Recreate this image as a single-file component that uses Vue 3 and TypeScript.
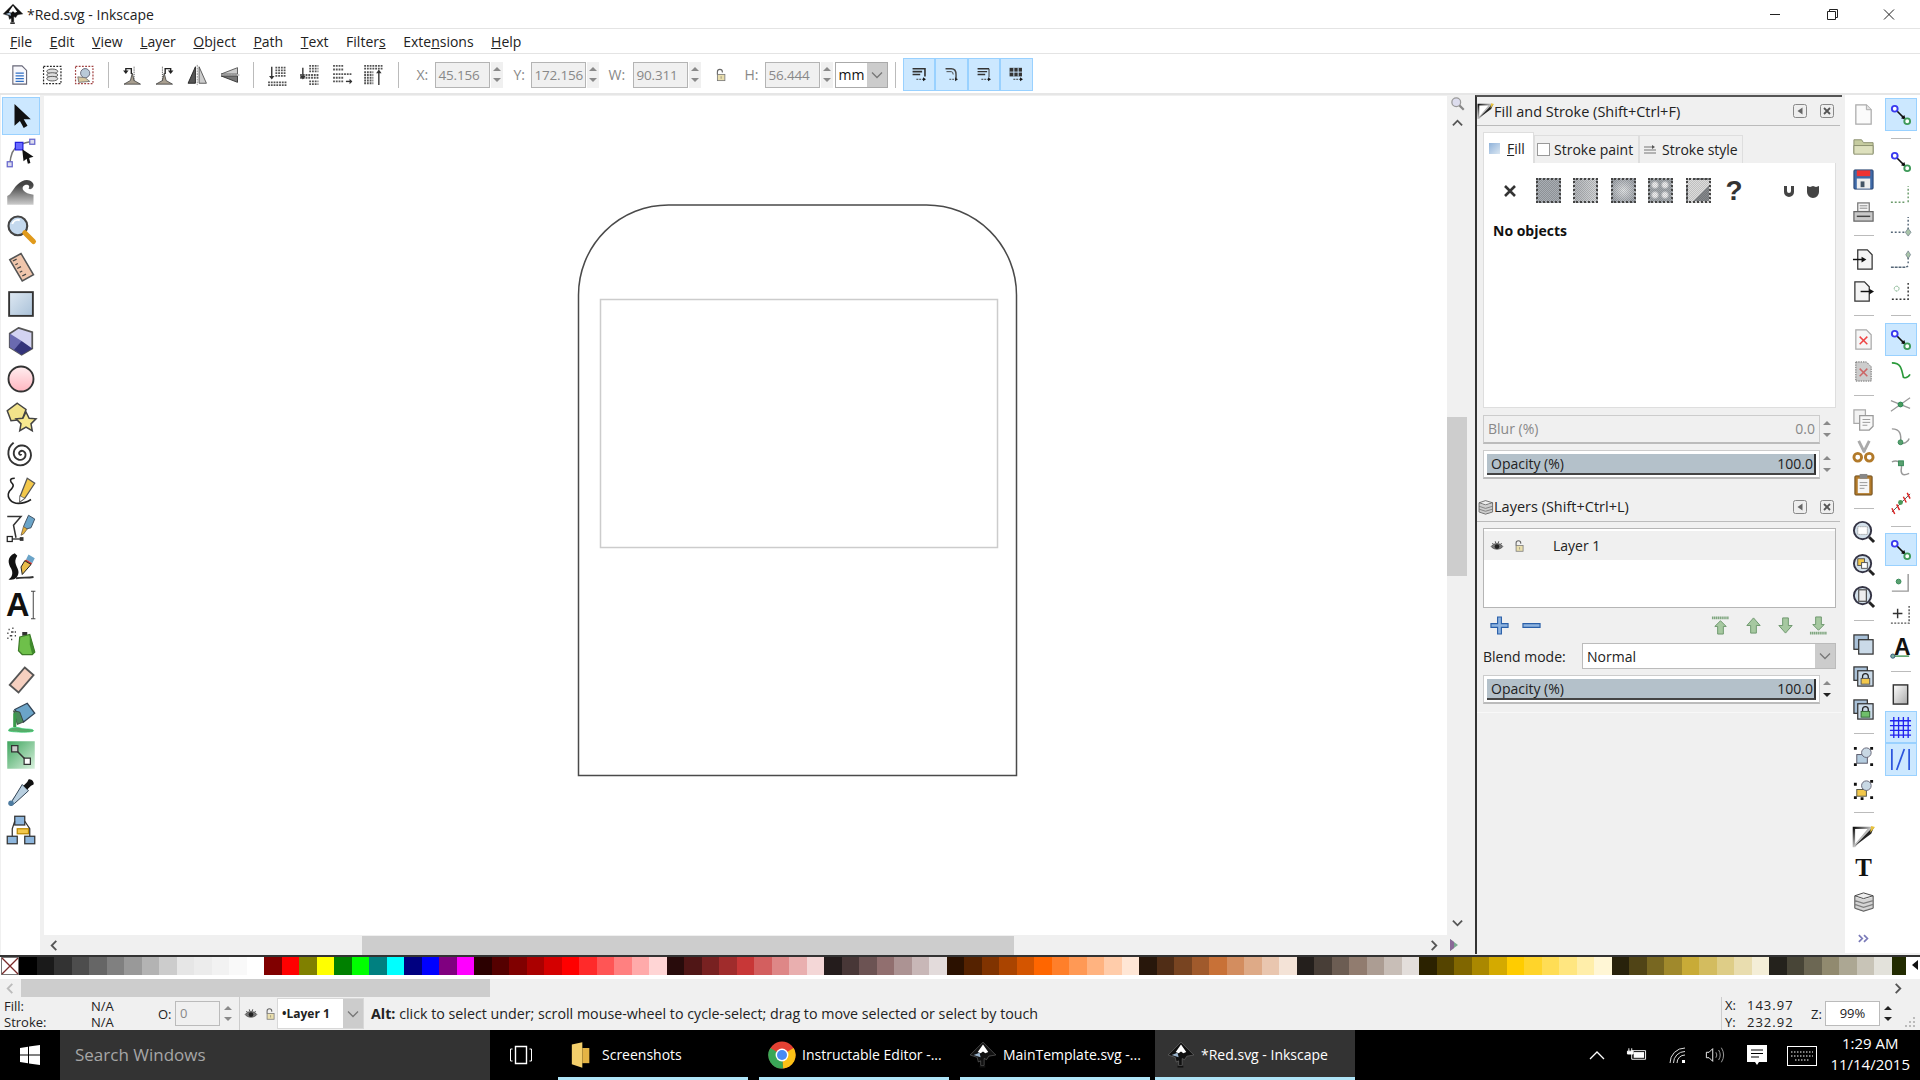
<template>
  <div class="app">
    <!-- title bar -->
    <div class="titlebar">
      <svg class="title-logo" viewBox="0 0 24 24" v-html="icons.inkscape"></svg>
      <span class="title-text">*Red.svg - Inkscape</span>
      <div class="win-btns">
        <svg viewBox="0 0 46 29"><path d="M18 14.5h10" stroke="#222" /></svg>
        <svg viewBox="0 0 46 29"><path d="M18.5 11.5h8v8h-8zM20.5 11.5v-2h8v8h-2" fill="none" stroke="#222" /></svg>
        <svg viewBox="0 0 46 29"><path d="M18 9.5l10 10M28 9.5l-10 10" stroke="#222" /></svg>
      </div>
    </div>

    <!-- menu -->
    <div class="menubar">
      <span v-for="m in menus" :key="m.pre + m.key + m.post" class="menu-item">{{ m.pre }}<u>{{ m.key }}</u>{{ m.post }}</span>
    </div>

    <!-- commands bar -->
    <div class="toolbar">
      <svg v-for="n in ['selAll', 'selLayers', 'deselect']" :key="n" class="tb-icon" viewBox="0 0 24 24" v-html="icons[n]"></svg>
      <span class="tb-sep"></span>
      <svg v-for="n in ['rotL', 'rotR', 'flipH', 'flipV']" :key="n" class="tb-icon" viewBox="0 0 24 24" v-html="icons[n]"></svg>
      <span class="tb-sep"></span>
      <svg v-for="n in ['lower', 'lowerOne', 'raiseOne', 'raise']" :key="n" class="tb-icon" viewBox="0 0 24 24" v-html="icons[n]"></svg>
      <span class="tb-sep"></span>
      <template v-for="f in dims" :key="f.label">
        <span class="dim-label" :style="{ marginLeft: f.gap + 'px', width: f.width + 'px' }">{{ f.label }}</span>
        <span class="dim-box">{{ f.value }}</span>
        <span class="spin"><i class="up"></i><i class="down"></i></span>
        <svg v-if="f.label === 'W:'" class="dim-lock" viewBox="0 0 24 24" v-html="icons.lock"></svg>
      </template>
      <div class="unit-combo">
        <span>mm</span>
        <b><svg viewBox="0 0 12 8"><path d="M1 1.5l5 5 5-5" fill="none" stroke="#777" stroke-width="1.3" /></svg></b>
      </div>
      <span class="tb-sep sep-units"></span>
      <div class="toggle-group">
        <svg v-for="n in ['tgl1', 'tgl2', 'tgl3', 'tgl4']" :key="n" class="toggle" viewBox="0 0 32 32" v-html="icons[n]"></svg>
      </div>
    </div>

    <div class="main">
      <!-- left tools -->
      <div class="left-tools">
        <div v-for="(n, i) in leftTools" :key="n" class="tool" :class="{ selected: i === 0 }">
          <svg viewBox="0 0 24 24" v-html="icons[n]"></svg>
        </div>
      </div>

      <!-- canvas and scrollbars -->
      <div class="center">
        <div class="canvas-row">
          <div class="canvas">
            <svg class="drawing" viewBox="44 96 1403 839">
              <path d="M578.5 775.5V295A90 90 0 0 1 668.5 205H926.5A90 90 0 0 1 1016.5 295V775.5Z" fill="#fff" stroke="#4a4a4a" stroke-width="1.5" />
              <rect x="600.5" y="299.5" width="397" height="248" fill="#fff" stroke="#ccc" stroke-width="1.5" />
            </svg>
          </div>
          <div class="vscroll">
            <svg class="corner-zoom" viewBox="0 0 24 24" v-html="icons.zoomGray"></svg>
            <svg class="arrow-v" viewBox="0 0 12 8"><path d="M1 6.5l5-5 5 5" fill="none" stroke="#555" stroke-width="2" /></svg>
            <div class="vtrack"><div class="vthumb"></div></div>
            <svg class="arrow-v" viewBox="0 0 12 8"><path d="M1 1.5l5 5 5-5" fill="none" stroke="#555" stroke-width="2" /></svg>
          </div>
        </div>
        <div class="hscroll">
          <svg class="arrow-h" viewBox="0 0 8 12"><path d="M6.5 1l-5 5 5 5" fill="none" stroke="#555" stroke-width="2" /></svg>
          <div class="htrack"><div class="hthumb"></div></div>
          <svg class="arrow-h" viewBox="0 0 8 12"><path d="M1.5 1l5 5-5 5" fill="none" stroke="#555" stroke-width="2" /></svg>
          <svg class="cms" viewBox="0 0 12 14"><path d="M2 1l8 6-8 6z" fill="#7aa98f" /><path d="M2 1l4 3v6l-4 3z" fill="#8a6a98" /></svg>
        </div>
      </div>

      <!-- dock -->
      <div class="dock">
        <div class="dock-title fs-title">
          <svg class="dock-icon" viewBox="0 0 24 24" v-html="icons.fillStroke"></svg>
          <span>Fill and Stroke (Shift+Ctrl+F)</span>
          <span class="dock-btns">
            <svg viewBox="0 0 14 14" v-html="icons.dockArrow"></svg>
            <svg viewBox="0 0 14 14" v-html="icons.dockClose"></svg>
          </span>
        </div>
        <div class="tabs">
          <div class="tab active"><i class="tab-swatch"></i><span><u>F</u>ill</span></div>
          <div class="tab paint"><i class="tab-empty"></i><span>Stroke paint</span></div>
          <div class="tab style">
            <svg viewBox="0 0 12 10"><path d="M0 2h8M0 5h12M0 8h12" stroke="#777" /><path d="M8 0l3 2-3 2z" fill="#555" /></svg>
            <span>Stroke style</span>
          </div>
        </div>
        <div class="notebook">
          <div class="paint-row">
            <svg class="paint-x" viewBox="0 0 14 14"><path d="M2 2l10 10M12 2L2 12" stroke="#333" stroke-width="2.6" /></svg>
            <i v-for="p in paintKinds" :key="p" class="paint-sq" :class="p"></i>
            <span class="paint-q">?</span>
            <svg class="shield first" viewBox="0 0 14 14"><path d="M2 2h3v5a2 2 0 0 0 4 0V2h3v6a5 5 0 0 1-10 0z" fill="#444" /></svg>
            <svg class="shield" viewBox="0 0 14 14"><path d="M1 2l3 1 3-1 3 1 3-1v6a6 6 0 0 1-12 0z" fill="#444" /></svg>
          </div>
          <div class="no-objects">No objects</div>
        </div>
        <div class="slider-row blur">
          <div class="slider"><span>Blur (%)</span><span>0.0</span></div>
          <span class="spin tall"><i class="up"></i><i class="down"></i></span>
        </div>
        <div class="slider-row">
          <div class="slider on"><div class="fill"><span>Opacity (%)</span><span>100.0</span></div></div>
          <span class="spin tall"><i class="up"></i><i class="down"></i></span>
        </div>

        <div class="dock-title layers-title">
          <svg class="dock-icon" viewBox="0 0 24 24" v-html="icons.layers"></svg>
          <span>Layers (Shift+Ctrl+L)</span>
          <span class="dock-btns">
            <svg viewBox="0 0 14 14" v-html="icons.dockArrow"></svg>
            <svg viewBox="0 0 14 14" v-html="icons.dockClose"></svg>
          </span>
        </div>
        <div class="layer-list">
          <div class="layer-row">
            <svg class="layer-eye" viewBox="0 0 24 24" v-html="icons.eye"></svg>
            <svg class="layer-lock" viewBox="0 0 24 24" v-html="icons.lock"></svg>
            <span>Layer 1</span>
          </div>
        </div>
        <div class="layer-btns">
          <svg viewBox="0 0 20 20"><path d="M8 1h4v7h7v4h-7v7H8v-7H1V8h7z" fill="#8fb4e0" stroke="#2a5fa8" stroke-width="1.2" /></svg>
          <svg class="minus" viewBox="0 0 20 20"><path d="M1 8h18v4H1z" fill="#8fb4e0" stroke="#2a5fa8" stroke-width="1.2" /></svg>
          <svg class="mv first" viewBox="0 0 20 20" v-html="icons.mvTop"></svg>
          <svg class="mv" viewBox="0 0 20 20" v-html="icons.mvUp"></svg>
          <svg class="mv" viewBox="0 0 20 20" v-html="icons.mvDown"></svg>
          <svg class="mv" viewBox="0 0 20 20" v-html="icons.mvBottom"></svg>
        </div>
        <div class="blend-row">
          <span class="blend-label">Blend mode:</span>
          <div class="blend-combo">
            <span>Normal</span>
            <b><svg viewBox="0 0 12 8"><path d="M1 1.5l5 5 5-5" fill="none" stroke="#777" stroke-width="1.3" /></svg></b>
          </div>
        </div>
        <div class="slider-row">
          <div class="slider on"><div class="fill"><span>Opacity (%)</span><span>100.0</span></div></div>
          <span class="spin tall"><i class="up"></i><i class="down dark"></i></span>
        </div>
        <div class="dock-end"></div>
      </div>

      <!-- commands and snap bars -->
      <div class="right-tools">
        <div class="cmd-col">
          <template v-for="(n, i) in commandBar" :key="i">
            <span v-if="n === '-'" class="col-sep"></span>
            <div v-else class="cmd"><svg viewBox="0 0 24 24" v-html="icons[n]"></svg></div>
          </template>
          <svg class="more" viewBox="0 0 14 10"><path d="M1 1l4 4-4 4M7 1l4 4-4 4" fill="none" stroke="#7a7ab8" stroke-width="2" /></svg>
        </div>
        <div class="cmd-col snap">
          <template v-for="(n, i) in snapBar" :key="i">
            <span v-if="n === '-'" class="col-sep"></span>
            <div v-else class="cmd" :class="{ on: n.endsWith('*') }"><svg viewBox="0 0 24 24" v-html="icons[n.replace('*', '')]"></svg></div>
          </template>
        </div>
      </div>
    </div>

    <!-- palette -->
    <div class="palette">
      <svg class="none-swatch" viewBox="0 0 18 18"><rect x="0.5" y="0.5" width="17" height="17" fill="#fff" stroke="#777" /><path d="M1 1l16 16M17 1L1 17" stroke="#7a2a2a" stroke-width="1.3" /></svg>
      <div class="swatches">
        <i v-for="(c, i) in palette" :key="i" :style="{ background: c }"></i>
      </div>
      <span class="palette-menu"></span>
    </div>
    <div class="palette-scroll">
      <svg class="arrow-h light" viewBox="0 0 8 12"><path d="M6.5 1l-5 5 5 5" fill="none" stroke="#bbb" stroke-width="2" /></svg>
      <div class="pal-thumb"></div>
      <svg class="arrow-h end" viewBox="0 0 8 12"><path d="M1.5 1l5 5-5 5" fill="none" stroke="#555" stroke-width="2" /></svg>
    </div>

    <!-- status bar -->
    <div class="statusbar">
      <div class="fs-info">
        <span>Fill:</span><span>N/A</span>
        <span>Stroke:</span><span>N/A</span>
      </div>
      <span class="o-label">O:</span>
      <span class="o-box">0</span>
      <span class="spin small"><i class="up"></i><i class="down"></i></span>
      <span class="st-sep"></span>
      <svg class="st-eye" viewBox="0 0 24 24" v-html="icons.eye"></svg>
      <svg class="st-lock" viewBox="0 0 24 24" v-html="icons.lock"></svg>
      <div class="layer-combo">
        <span>•Layer 1</span>
        <b><svg viewBox="0 0 12 8"><path d="M1 1.5l5 5 5-5" fill="none" stroke="#777" stroke-width="1.3" /></svg></b>
      </div>
      <span class="message"><b>Alt:</b> click to select under; scroll mouse-wheel to cycle-select; drag to move selected or select by touch</span>
      <div class="coords">
        <span class="cl">X:</span><span class="cv">143.97</span>
        <span class="cl">Y:</span><span class="cv">232.92</span>
      </div>
      <span class="z-label">Z:</span>
      <span class="z-box">99%</span>
      <span class="spin small active"><i class="up"></i><i class="down"></i></span>
      <svg class="grip" viewBox="0 0 12 12"><path d="M9 1h2v2H9zM5 5h2v2H5zM9 5h2v2H9zM1 9h2v2H1zM5 9h2v2H5zM9 9h2v2H9z" fill="#bbb" /></svg>
    </div>

    <!-- taskbar -->
    <div class="taskbar">
      <div class="start">
        <svg viewBox="0 0 20 20"><path d="M0 3l8-1.2V9.500H0zM9 1.600L20 0v9.500H9zM0 10.500h8v7.700L0 17zM9 10.500h11V20L9 18.400z" fill="#fff" /></svg>
      </div>
      <div class="search">Search Windows</div>
      <div class="task-view">
        <svg viewBox="0 0 24 20"><path d="M6.500 1.500h11v17h-11z" fill="none" stroke="#fff" stroke-width="1.4" /><path d="M3.500 4H1.500v12h2M20.500 4h2v12h-2" fill="none" stroke="#fff" /></svg>
      </div>
      <div class="task-btn first">
        <svg viewBox="0 0 24 24"><path d="M5 3l9-2v22l-9-3z" fill="#f3cf6b" /><path d="M14 6h6v13h-6z" fill="#e4b445" /></svg>
        <span>Screenshots</span>
      </div>
      <div class="task-btn">
        <svg viewBox="0 0 24 24" v-html="icons.chrome"></svg>
        <span>Instructable Editor -...</span>
      </div>
      <div class="task-btn">
        <svg viewBox="0 0 24 24" v-html="icons.inkscape"></svg>
        <span>MainTemplate.svg -...</span>
      </div>
      <div class="task-btn current">
        <svg viewBox="0 0 24 24" v-html="icons.inkscape"></svg>
        <span>*Red.svg - Inkscape</span>
      </div>
      <div class="tray">
        <svg class="t-chev" viewBox="0 0 16 10"><path d="M1 9l7-7 7 7" fill="none" stroke="#fff" stroke-width="1.300" /></svg>
        <svg class="t-batt" viewBox="0 0 22 14"><path d="M3 1v3M6 1v3M1.500 4h6v3h-6z" stroke="#fff" fill="#fff" /><path d="M6 3.500h14.500v9H6z" fill="none" stroke="#fff" /><path d="M8 5h11v6H8z" fill="#fff" /></svg>
        <svg class="t-wifi" viewBox="0 0 18 18"><path d="M1 16a15 15 0 0 1 15-15M4.500 16a11.500 11.500 0 0 1 11.500-11.500M8 16a8 8 0 0 1 8-8" fill="none" stroke="#ddd" /><path d="M13 13h3v3h-3z" fill="#fff" /></svg>
        <svg class="t-vol" viewBox="0 0 22 18"><path d="M1.500 6h3l4-4v14l-4-4h-3z" fill="none" stroke="#fff" /><path d="M12 6q2 3 0 6M15 3.500q3.500 5.500 0 11M18 1q5 8 0 16" fill="none" stroke="#aaa" /></svg>
        <svg class="t-note" viewBox="0 0 20 22"><path d="M0 0h20v17h-8l-2 3-2-3H0z" fill="#fff" /><path d="M4 5h12M4 8.500h12M4 12h8" stroke="#000" stroke-width="1.200" /></svg>
        <svg class="t-kbd" viewBox="0 0 30 20"><rect x="0.500" y="0.500" width="29" height="19" fill="none" stroke="#fff" /><path d="M4 6h22M4 10h22M8 14h14" stroke="#fff" stroke-dasharray="1.500 1.500" /></svg>
        <div class="clock"><span>1:29 AM</span><span>11/14/2015</span></div>
      </div>
    </div>
  </div>
</template>

<script setup lang="ts">
const menus = [
  { pre: '', key: 'F', post: 'ile' },
  { pre: '', key: 'E', post: 'dit' },
  { pre: '', key: 'V', post: 'iew' },
  { pre: '', key: 'L', post: 'ayer' },
  { pre: '', key: 'O', post: 'bject' },
  { pre: '', key: 'P', post: 'ath' },
  { pre: '', key: 'T', post: 'ext' },
  { pre: 'Filter', key: 's', post: '' },
  { pre: 'Exte', key: 'n', post: 'sions' },
  { pre: '', key: 'H', post: 'elp' },
]

const dims = [
  { label: 'X:', value: '45.156', gap: 11, width: 18 },
  { label: 'Y:', value: '172.156', gap: 11, width: 17 },
  { label: 'W:', value: '90.311', gap: 10, width: 24 },
  { label: 'H:', value: '56.444', gap: 17, width: 20 },
]

const paintKinds = ['flat', 'linear', 'radial', 'mesh', 'pattern']

const leftTools = ['select', 'node', 'tweak', 'zoom', 'measure', 'rect', 'box3d', 'circle', 'star', 'spiral', 'pencil', 'pen', 'callig', 'textA', 'spray', 'eraser', 'bucket', 'gradient', 'dropper', 'connector']

const commandBar = ['new', 'open', 'save', 'print', '-', 'import', 'export', '-', 'docClose', 'docClose2', '-', 'copy', 'cut', 'paste', '-', 'zoomSel', 'zoomDraw', 'zoomPage', '-', 'dup', 'locked', 'unlocked', '-', 'group', 'ungroup', '-', 'fillStroke', 'textT', 'layers']

const snapBar = ['snap*', '-', 'snap', 'bboxA', 'bboxB', 'bboxC', 'bboxD', '-', 'snap*', 'curve', 'cross', 'curve2', 'curve3', 'smooth', '-', 'snap*', 'corner', 'plus', 'textSnap', '-', 'page', 'grid*', 'guide*']

// Inkscape default palette, left to right
const palette = ('000000 1a1a1a 333333 4d4d4d 666666 808080 999999 b3b3b3 cccccc e6e6e6 ececec f2f2f2 f9f9f9 ffffff ' +
  '800000 ff0000 808000 ffff00 008000 00ff00 008080 00ffff 000080 0000ff 800080 ff00ff ' +
  '2b0000 550000 800000 aa0000 d40000 ff0000 ff2a2a ff5555 ff8080 ffaaaa ffd5d5 ' +
  '280b0b 501616 782121 a02c2c c83737 d35f5f de8787 e9afaf f4d7d7 ' +
  '241c1c 483737 6c5353 916f6f ac9393 c8b7b7 e3dbdb ' +
  '2b1100 552200 803300 aa4400 d45500 ff6600 ff7f2a ff9955 ffb380 ffccaa ffe6d5 ' +
  '28170b 502d16 784421 a05a2c c87137 d38d5f deaa87 e9c6af f4e3d7 ' +
  '241f1c 483e37 6c5d53 917c6f ac9d93 c8beb7 e3dedb ' +
  '2b2200 554400 806600 aa8800 d4aa00 ffcc00 ffd42a ffdd55 ffe680 ffeeaa fff6d5 ' +
  '28220b 504416 786721 a0892c c8ab37 d3bc5f decd87 e9ddaf f4eed7 ' +
  '24221c 484537 6c6753 918a6f aca793 c8c4b7 e3e2db 222b00').split(' ').map((c) => '#' + c)

// spiral tool icon: three turns out from the middle
const spiralPoints: string[] = []
for (let t = 0; t <= 5 * Math.PI; t += 0.25) {
  const r = 0.7 * t
  spiralPoints.push((12 + r * Math.cos(t + 1.2)).toFixed(1) + ',' + (12 + r * Math.sin(t + 1.2)).toFixed(1))
}

const snapLine = '<path d="M6 6l10 10" stroke="#111" stroke-width="1.600"/><path d="M17.500 17.500l-5-1.500 3.500-3.500z" fill="#111"/>'
const nodeA = '<circle cx="6" cy="6" r="3" fill="#fff" stroke="#3a3af0" stroke-width="2"/>'
const nodeB = '<circle cx="19" cy="19" r="3" fill="#fff" stroke="#3f9a5a" stroke-width="2"/>'
const dots = 'stroke="#567" stroke-width="1.500" stroke-dasharray="2 2" fill="none"'
const arrowDown = '<path d="M5 1v12" stroke="#333" stroke-width="1.500"/><path d="M2 11l3 4 3-4z" fill="#333"/>'
const rows = 'stroke="#555" stroke-width="2" stroke-dasharray="2 1"'

const icons: Record<string, string> = {
  inkscape: '<path d="M12 1L23 12l-6 1-2 3-2-1v6h-3v-4l-2 1-1-4-6-2z" fill="#111" stroke="#888" stroke-width=".4"/><path d="M12 3L7.500 9.500l2.500 1 2-1.500 2 1.500 2.500-1z" fill="#fff"/><path d="M4 12l5-2 1 4z" fill="#9bb4cc"/><path d="M9 22h5" stroke="#111" stroke-width="1.500"/>',
  chrome: '<circle cx="12" cy="12" r="11.500" fill="#e34133"/><path d="M12 12L22 6a11.500 11.500 0 0 1-9 17.500z" fill="#fbc116"/><path d="M12 12l1 11.500A11.500 11.500 0 0 1 2 6z" fill="#3aa757"/><circle cx="12" cy="12" r="5.500" fill="#fff"/><circle cx="12" cy="12" r="4.300" fill="#4a8af4"/>',
  select: '<path d="M6 1v20l5-4.500L14.500 23l3.500-2-3.500-6H21z" fill="#111"/>',
  node: '<path d="M3 21Q4 9 10 6T21 3" fill="none" stroke="#777" stroke-width="1.200"/><rect x="7.500" y="3.500" width="6" height="6" fill="#6a6aff" stroke="#2222dd"/><rect x="1" y="19" width="4" height="4" fill="#dde" stroke="#66c"/><rect x="19" y="1" width="4" height="4" fill="#dde" stroke="#66c"/><path d="M13 9l9 6-3.500 1 1 4-2 .5-1-4-2.500 2z" fill="#111"/>',
  tweak: '<defs><linearGradient id="gw" x1="0" y1="0" x2="0" y2="1"><stop offset=".2" stop-color="#444"/><stop offset="1" stop-color="#ccc"/></linearGradient></defs><path d="M1 23v-7c3-1 4-5 8-9s9-5 12-2-1 7-3 5c2-3-2-4-4-2s0 6 8 7v8z" fill="url(#gw)"/>',
  zoom: '<circle cx="9.500" cy="9.500" r="7.500" fill="#c4d9ee" stroke="#444" stroke-width="1.700"/><path d="M5 8a5 5 0 0 1 6-3" stroke="#fff" fill="none" stroke-width="1.500"/><path d="M15 15l7 7" stroke="#e09a1c" stroke-width="4" stroke-linecap="round"/>',
  measure: '<path d="M3 7l9-5 10 17-9 5z" fill="#f0c6ac" stroke="#555" stroke-width="1.200"/><path d="M5.500 8l3-1.500M7.500 11l2-1M9 14l3-1.500M11 17l2-1M13 20l3-1.500" stroke="#444"/>',
  rect: '<defs><linearGradient id="gr" x1="0" y1="0" x2="1" y2="1"><stop offset="0" stop-color="#dfe9f3"/><stop offset="1" stop-color="#a9c1d8"/></linearGradient></defs><rect x="2.500" y="2.500" width="19" height="19" fill="url(#gr)" stroke="#333" stroke-width="1.500"/>',
  box3d: '<path d="M10 1.500L21 5v13l-8.500 5L3 17V6z" fill="#d3d3f2" stroke="#555" stroke-width="1.400"/><path d="M3 6l9.500 6v11L3 17z" fill="#6a6ab0"/><path d="M12.500 12L21 18l-8.500 5-6-4z" fill="#33337a"/>',
  circle: '<defs><linearGradient id="gc" x1="0" y1="0" x2="0" y2="1"><stop offset="0" stop-color="#ffeef0"/><stop offset="1" stop-color="#ffb6c0"/></linearGradient></defs><circle cx="12" cy="12" r="10" fill="url(#gc)" stroke="#333" stroke-width="1.500"/>',
  star: '<path d="M9 1l7 5-3 8-9 1-3-8z" fill="#f2e38a" stroke="#444" stroke-width="1.200"/><path d="M16 8l2.500 5 5.500.5-4 4 1 5.500-5-3-5 3 1-5.500-4-4 5.500-.5z" fill="#f7e98f" stroke="#444" stroke-width="1.200"/>',
  spiral: '<polyline points="' + spiralPoints.join(' ') + '" fill="none" stroke="#333" stroke-width="1.500"/>',
  pencil: '<path d="M7 1c-3 0-4 1-3 3 2 2 3 3-1 7-3 4 0 9 5 10 5 .5 9-1 12-3" fill="none" stroke="#222" stroke-width="1.300"/><path d="M17 1l6 4-8 12-4 3 .5-5z" fill="#f3c84b" stroke="#555"/><path d="M11 15l4 2-4 3z" fill="#fff" stroke="#444" stroke-width=".5"/>',
  pen: '<path d="M1 2h11L6 9l2 10" fill="none" stroke="#333" stroke-width="1.200"/><rect x="1" y="18" width="4" height="4" fill="#fff" stroke="#222"/><path d="M5 20h7" stroke="#222"/><rect x="11" y="18.500" width="3" height="3" fill="#333"/><path d="M18 1l5 3-3 7-4 1-2-2z" fill="#6ba4c8" stroke="#456" stroke-width=".8"/><path d="M14 10l3 2-3 4-2 1z" fill="#e3b23c" stroke="#654" stroke-width=".6"/>',
  callig: '<path d="M7 1c-7 3-5 9-3 12 2 4 1 7-2 9 5 1 8-2 8-6 0-4-5-7-1-13z" fill="#111"/><path d="M8 21c5-1 9 0 14-1" stroke="#333" stroke-width="1.500" fill="none"/><path d="M18 2l5 3-2 4-5-3z" fill="#6ba4c8"/><path d="M16 6l5 3-1 1-5-3z" fill="#c33"/><path d="M15 7l5 3-7 8-1-6z" fill="#e9bc4a" stroke="#222" stroke-width=".8"/>',
  textA: '<text x="0" y="20.500" font-family="Liberation Sans, sans-serif" font-weight="700" font-size="26" fill="#111">A</text><path d="M20 1h3.500M21.800 1v22M20 23h3.500" stroke="#444" stroke-width=".8"/>',
  spray: '<path d="M2 2h1M5 1h1M1 5h1M4 4h2M7 4h1M3 7h2M7 7h1M1 9h1M4 10h1" stroke="#444" stroke-width="1.300"/><path d="M13 4h4v3h-4z" fill="#333"/><path d="M11 8l8-2 4 14-2 2h-8l-3-3z" fill="#6ec04a" stroke="#3c7a27"/><path d="M19 6l4 14-2 2-2-8z" fill="#3f8a2c"/>',
  eraser: '<path d="M15 2l7 6-12 14-7-6z" fill="#f6d0c0" stroke="#555" stroke-width="1.500"/>',
  bucket: '<path d="M2 23c0-3 8-3 10-2s10 0 10 2-20 1-20 0z" fill="#5aaa6a" stroke="#2c6" stroke-width=".5"/><path d="M7 6l10-5 6 8-9 7z" fill="#6ba4c8" stroke="#345"/><path d="M6 7l5 1 3 8-5 2z" fill="#4a8a5a" stroke="#333" stroke-width=".6"/><path d="M7 9v11" stroke="#3a9a4a" stroke-width="2.500"/>',
  gradient: '<defs><linearGradient id="gg" x1="0" y1="0" x2="1" y2="1"><stop offset="0" stop-color="#3ea55e"/><stop offset="1" stop-color="#d8f0dc"/></linearGradient></defs><rect x="1" y="1" width="22" height="22" fill="url(#gg)"/><path d="M7 7l10 10" stroke="#333" stroke-width="1.200"/><rect x="4.500" y="4.500" width="5" height="5" fill="#ccc" stroke="#333"/><rect x="14.500" y="14.500" width="5" height="5" fill="#fff" stroke="#333"/>',
  dropper: '<path d="M15 9l-9 10" stroke="#88a6c0" stroke-width="3"/><path d="M13 6l5 5-11 10-3 2-1-1 2-3z" fill="#b8cfe0" stroke="#345" stroke-width=".8"/><path d="M14 7l3-3 1-2c2-1 5 2 4 4l-2 1-3 3z" fill="#111"/><circle cx="4" cy="21" r="2.200" fill="#4d7ba0"/>',
  connector: '<rect x="7" y="1" width="8" height="7" fill="#8db6dd" stroke="#333"/><rect x="9" y="11" width="9" height="4" fill="#f3c84b" stroke="#b80"/><rect x="1" y="17" width="8" height="6" fill="#8db6dd" stroke="#333"/><rect x="15" y="17" width="8" height="6" fill="#8db6dd" stroke="#333"/><path d="M7 5L5 11v6M15 5l4 6v6" fill="none" stroke="#333"/>',
  selAll: '<path d="M5 2h10l5 5v15H5z" fill="#f8f8fc" stroke="#667" stroke-width="1.200"/><path d="M8 10h9M8 13h9M8 16h9M8 19h9" stroke="#2f6fc4" stroke-width="1.500"/>',
  selLayers: '<rect x="2.500" y="2.500" width="19" height="19" fill="#fff" stroke="#222" stroke-width="1.300" stroke-dasharray="2 1.500"/><ellipse cx="12" cy="8" rx="6" ry="2.500" fill="#ddd" stroke="#555"/><ellipse cx="12" cy="12" rx="6" ry="2.500" fill="#ddd" stroke="#555"/><ellipse cx="12" cy="16" rx="6" ry="2.500" fill="#ddd" stroke="#555"/>',
  deselect: '<rect x="2.500" y="2.500" width="19" height="19" fill="#fff" stroke="#a04040" stroke-width="1.300" stroke-dasharray="2 1.500"/><circle cx="13" cy="10" r="5" fill="#b9c9d8" stroke="#667"/><path d="M5 14l8 1 5 4-12 1z" fill="#d8c8a0" stroke="#777"/>',
  rotL: '<path d="M3 22l7-4 2-8 2 8 7 4z" fill="#a89f90" stroke="#333" stroke-width=".8"/><path d="M14 3v15" stroke="#333" stroke-dasharray="1 1"/><path d="M11 11V5H5v3" fill="none" stroke="#222" stroke-width="1.500"/><path d="M2 7h6l-3 4z" fill="#222"/>',
  rotR: '<path d="M3 22l7-4 2-8 2 8 7 4z" fill="#a89f90" stroke="#333" stroke-width=".8"/><path d="M10 3v15" stroke="#333" stroke-dasharray="1 1"/><path d="M13 11V5h6v3" fill="none" stroke="#222" stroke-width="1.500"/><path d="M16 7h6l-3 4z" fill="#222"/>',
  flipH: '<path d="M10 3L2 21h8z" fill="#555" stroke="#222"/><path d="M14 3l8 18h-8z" fill="#ccc" stroke="#555"/><path d="M12 1v22" stroke="#888" stroke-dasharray="2 1"/>',
  flipV: '<path d="M21 4L3 11h18z" fill="#ccc" stroke="#555"/><path d="M21 20L3 13h18z" fill="#777" stroke="#333"/><path d="M3 12h20" stroke="#888" stroke-dasharray="2 1"/>',
  lower: '<g transform="translate(1 2)">' + arrowDown + '</g><path d="M10 4h11M10 7h11M10 10h11M10 13h11M2 20h20M2 23h20" ' + rows + '/>',
  lowerOne: '<path d="M12 2h10M12 5h10M12 8h10M2 12h20M2 15h20M12 19h10M12 22h10" ' + rows + '/><path d="M5 4v11" stroke="#333" stroke-width="1.500"/><path d="M2 13l3 4 3-4z" fill="#333"/>',
  raiseOne: '<path d="M2 2h12M2 6h12M2 11h20M2 15h12M2 19h12" ' + rows + '/><path d="M16 19h6" stroke="#333" stroke-width="1.500"/><path d="M20 16l3 3-3 3z" fill="#333"/>',
  raise: '<path d="M1 2h20M1 5h20M1 9h10M1 12h10M1 15h10M1 18h10M1 21h10" ' + rows + '/><path d="M17 8v15" stroke="#333" stroke-width="1.500"/><path d="M14 10l3-4 3 4z" fill="#333"/>',
  lock: '<path d="M7 11V7a4 4 0 0 1 8 0v1" fill="none" stroke="#666" stroke-width="1.800"/><rect x="7" y="11" width="12" height="10" fill="#eadfae" stroke="#777" stroke-width="1.300"/><path d="M13 14v4" stroke="#776"/>',
  eye: '<path d="M2 13c4-7 16-7 20 0-4 6-16 6-20 0z" fill="#777" stroke="#333"/><circle cx="12" cy="13" r="4" fill="#222"/><path d="M4 7l2 2M9 4l1 3M15 4l-1 3M20 7l-2 2" stroke="#333" stroke-width="1.500"/>',
  zoomGray: '<circle cx="10" cy="10" r="7" fill="#dde" stroke="#999" stroke-width="2"/><path d="M15 15l7 7" stroke="#888" stroke-width="3.500"/>',
  fillStroke: '<defs><linearGradient id="gf" x1="0" y1="0" x2="1" y2="1"><stop offset="0" stop-color="#111"/><stop offset=".6" stop-color="#ddd"/></linearGradient></defs><path d="M2 3h17L3 22H2z" fill="#fff" stroke="url(#gf)" stroke-width="2.500"/><path d="M3 22L20 4l3-2-3 7z" fill="#222"/><path d="M20 1l4 1-5 6z" fill="#e8c23c"/>',
  layers: '<path d="M3 6l9-3 10 3-10 3z" fill="#eee" stroke="#444"/><path d="M3 11l9 3 10-3M3 15l9 3 10-3M3 19l9 3 10-3M3 6v13M22 6v13" fill="none" stroke="#555" stroke-width="1.300"/><path d="M3 7l9 3 10-3v12l-10 3-9-3z" fill="#aaa" opacity=".5"/>',
  dockArrow: '<rect x=".5" y=".5" width="13" height="13" rx="2" fill="#eee" stroke="#888"/><path d="M9.500 3.500v7l-5-3.500z" fill="#666"/>',
  dockClose: '<rect x=".5" y=".5" width="13" height="13" rx="2" fill="#eee" stroke="#888"/><path d="M4 4l6 6M10 4l-6 6" stroke="#555" stroke-width="1.800"/>',
  mvTop: '<path d="M1 2h18" stroke="#7fa67f" stroke-width="3" stroke-dasharray="1.500 .5"/><path d="M10 5l6 6h-3v8H7v-8H4z" fill="#a6c8a0" stroke="#6b966b"/>',
  mvUp: '<path d="M10 2l7 8h-4v8H7v-8H3z" fill="#a6c8a0" stroke="#6b966b"/>',
  mvDown: '<path d="M10 18l7-8h-4V2H7v8H3z" fill="#a6c8a0" stroke="#6b966b"/>',
  mvBottom: '<path d="M10 15l6-6h-3V1H7v8H4z" fill="#a6c8a0" stroke="#6b966b"/><path d="M1 18h18" stroke="#7fa67f" stroke-width="3" stroke-dasharray="1.500 .5"/>',
  tgl1: '<path d="M9 10h13v8M9 13h10M9 16h8" fill="none" stroke="#333" stroke-width="1.700"/><path d="M13 21h8" stroke="#333" stroke-dasharray="2 1"/><path d="M20 19l3 2-3 2z" fill="#111"/>',
  tgl2: '<path d="M10 10h6q5 0 5 6v4" fill="none" stroke="#444" stroke-width="1.500"/><path d="M11 13h5q2 0 2 3" fill="none" stroke="#444"/><path d="M14 21h7" stroke="#444" stroke-dasharray="2 1"/><path d="M20 19l3 2-3 2z" fill="#222"/>',
  tgl3: '<path d="M9 10h12M9 13h10M9 16h8" fill="none" stroke="#333" stroke-width="1.500"/><path d="M21 10v9" stroke="#333"/><path d="M13 21h8" stroke="#333" stroke-dasharray="2 1"/><path d="M20 19l3 2-3 2z" fill="#111"/>',
  tgl4: '<rect x="9" y="9" width="13" height="9" fill="#333"/><path d="M13.500 9v9M18 9v9M9 13.500h13" stroke="#cbe6ff"/><path d="M13 21h8" stroke="#333" stroke-dasharray="2 1"/><path d="M20 19l3 2-3 2z" fill="#111"/>',
  new: '<path d="M4 2h11l5 5v15H4z" fill="#fbfbfb" stroke="#aaa" stroke-width="1.300"/><path d="M15 2v5h5" fill="#e2e2e2" stroke="#aaa"/>',
  open: '<path d="M2 5h8l2 3h10v11H2z" fill="#c6cca0" stroke="#8a8f6e"/><path d="M2 11h20v9H2z" fill="#dde0bd" stroke="#8a8f6e"/>',
  save: '<rect x="2" y="2" width="20" height="20" rx="1" fill="#3f6aa8" stroke="#26426e"/><rect x="5" y="2.500" width="14" height="6" fill="#e33"/><rect x="5" y="11" width="14" height="10.500" fill="#eee"/><rect x="9" y="14" width="4" height="6" fill="#456"/>',
  print: '<rect x="6" y="2" width="12" height="9" fill="#f4f4f4" stroke="#777" stroke-width="1.300"/><path d="M8 5h8M8 7.500h8" stroke="#888"/><path d="M2 11h20v10H2z" fill="#c8c8c8" stroke="#666" stroke-width="1.300"/><path d="M5 16h14" stroke="#444" stroke-width="1.500"/>',
  import: '<path d="M6 2h10l5 5v15H6z" fill="#f4f4f4" stroke="#333" stroke-width="1.300"/><path d="M1 12h11" stroke="#111" stroke-width="1.500"/><path d="M10 9l5 3-5 3z" fill="#111"/>',
  export: '<path d="M3 2h10l5 5v15H3z" fill="#f4f4f4" stroke="#333" stroke-width="1.300"/><path d="M9 12h11" stroke="#111" stroke-width="1.500"/><path d="M18 9l5 3-5 3z" fill="#111"/>',
  docClose: '<path d="M4 2h11l5 5v15H4z" fill="#f6f6f6" stroke="#aaa" stroke-width="1.300"/><path d="M8 9l8 8M16 9l-8 8" stroke="#e44" stroke-width="1.500"/>',
  docClose2: '<path d="M4 2h11l5 5v15H4z" fill="#ccc" stroke="#666" stroke-dasharray="1.500 1"/><path d="M8 9l8 8M16 9l-8 8" stroke="#c66" stroke-width="1.500"/>',
  copy: '<path d="M2 2h12v14H2z" fill="#f2f2f2" stroke="#aaa" stroke-width="1.300"/><path d="M8 8h14v11l-4 4H8z" fill="#f8f8f8" stroke="#999" stroke-width="1.300"/><path d="M11 12h8M11 15h8M11 18h5" stroke="#999"/>',
  cut: '<path d="M7 1l6 12M18 1l-6 12" stroke="#aaa" stroke-width="3"/><circle cx="6" cy="18" r="4" fill="none" stroke="#b27a2a" stroke-width="3"/><circle cx="18" cy="18" r="4" fill="none" stroke="#b27a2a" stroke-width="3"/>',
  paste: '<rect x="3" y="3" width="18" height="20" rx="1" fill="#b27a2a" stroke="#6b4a1a"/><rect x="6" y="6" width="12" height="15" fill="#f6f6f6"/><path d="M8 1h8v5H8z" fill="#888"/><path d="M8 10h8M8 13h8M8 16h5" stroke="#999"/>',
  zoomSel: '<circle cx="11" cy="11" r="9" fill="#d3e0ea" stroke="#334" stroke-width="2"/><rect x="6" y="7" width="10" height="8" fill="#fff" stroke="#888" stroke-dasharray="1 1"/><path d="M18 18l5 5" stroke="#222" stroke-width="3"/>',
  zoomDraw: '<circle cx="11" cy="11" r="9" fill="#d3e0ea" stroke="#334" stroke-width="2"/><rect x="6" y="6" width="7" height="7" fill="#f3c84b" stroke="#555"/><rect x="10" y="10" width="6" height="6" fill="#fff" stroke="#555"/><path d="M18 18l5 5" stroke="#222" stroke-width="3"/>',
  zoomPage: '<circle cx="11" cy="11" r="9" fill="#d3e0ea" stroke="#334" stroke-width="2"/><rect x="7" y="5" width="8" height="12" fill="#eee" stroke="#555" stroke-width="1.300"/><path d="M18 18l5 5" stroke="#222" stroke-width="3"/>',
  dup: '<rect x="2" y="2" width="15" height="15" fill="#a9c1d8" stroke="#333" stroke-width="1.300"/><rect x="7" y="7" width="15" height="15" fill="#cadae8" stroke="#333" stroke-width="1.300"/>',
  locked: '<rect x="2" y="2" width="14" height="14" fill="#a9c1d8" stroke="#333" stroke-width="1.300"/><rect x="6" y="6" width="16" height="16" fill="#cadae8" stroke="#333" stroke-width="1.300"/><path d="M11 14v-2a3 3 0 0 1 6 0v2" fill="none" stroke="#222" stroke-width="1.300"/><rect x="9.500" y="14" width="9" height="6" fill="#f3c84b" stroke="#555"/>',
  unlocked: '<rect x="2" y="2" width="14" height="14" fill="#a9c1d8" stroke="#333" stroke-width="1.300"/><rect x="6" y="6" width="16" height="16" fill="#cadae8" stroke="#333" stroke-width="1.300"/><path d="M11 14v-2a3 3 0 0 1 6 0v2" fill="none" stroke="#222" stroke-width="1.300"/><rect x="9.500" y="14" width="9" height="6" fill="#6fbf6a" stroke="#363"/>',
  group: '<rect x="5" y="10" width="11" height="9" fill="#b5cde0" stroke="#556"/><circle cx="15" cy="8" r="5" fill="#c8d8e4" stroke="#667"/><path d="M2 2h3v3H2zM19 2h3v3h-3zM2 19h3v3H2zM19 19h3v3h-3z" fill="#111"/>',
  ungroup: '<rect x="5" y="12" width="10" height="7" fill="#f3c84b" stroke="#554"/><circle cx="15" cy="8" r="5" fill="#c8d8e4" stroke="#667"/><path d="M2 5h3v3H2zM19 2h3v3h-3zM2 19h3v3H2zM19 19h3v3h-3zM9 20h3v3H9z" fill="#111"/>',
  textT: '<text x="12" y="20" text-anchor="middle" font-family="Liberation Serif, serif" font-weight="700" font-size="26" fill="#111">T</text>',
  snap: snapLine + nodeA + nodeB,
  bboxA: '<path d="M2 20h16M20 20V3" ' + dots.replace('#567', '#6a9a6a') + '/>',
  bboxB: '<path d="M2 18h15M20 15V2" ' + dots + '/><path d="M20 14l3 4-3 4-3-4z" fill="#a9c4a9" stroke="#567" stroke-width=".6"/>',
  bboxC: '<path d="M2 20h15l3-1" ' + dots.replace('stroke-dasharray="2 2"', 'stroke-dasharray="3 1"') + '/><path d="M20 16V7" ' + dots + '/><path d="M20 3l2.500 4-2.500 4-2.500-4z" fill="#a9c4a9" stroke="#567" stroke-width=".6"/>',
  bboxD: '<path d="M3 20h17V3" ' + dots.replace('#567', '#333') + '/><circle cx="8" cy="9" r="2.500" fill="none" stroke="#5a9a6a" stroke-dasharray="1 .6"/>',
  curve: '<path d="M3 3c9 0 10 5 12 15 2 1 5 0 7-3" fill="none" stroke="#2a9a3a" stroke-width="1.700"/>',
  cross: '<path d="M2 19L22 5M2 8l20 8" stroke="#999" stroke-width="1.300"/><circle cx="12" cy="12" r="2.500" fill="#4a9a5a" stroke="#285"/>',
  curve2: '<path d="M3 3c9 0 10 6 9 15 3 1 8-1 9-5" fill="none" stroke="#999" stroke-width="1.500"/><circle cx="12" cy="17" r="2.500" fill="#5aa070" stroke="#385"/>',
  curve3: '<path d="M3 4c5-2 11 0 10 6-1 5 0 10 8 6" fill="none" stroke="#999" stroke-width="1.500"/><rect x="10" y="3" width="5" height="5" fill="#5aa070" stroke="#385"/>',
  smooth: '<path d="M3 22L22 3" stroke="#555"/><path d="M3 18l3 6M8 14l3 6M15 6l3 6M19 2l3 6" stroke="#d22" stroke-width="1.500"/><circle cx="12" cy="12" r="2.500" fill="#4a9a5a"/>',
  corner: '<path d="M3 21h17V3" fill="none" stroke="#999" stroke-width="1.500"/><circle cx="10" cy="11" r="2.500" fill="#5aa070" stroke="#385"/>',
  plus: '<path d="M4 11h10M9 6v10" stroke="#333" stroke-width="1.500"/><path d="M2 21h19V3" fill="none" stroke="#555" stroke-width="1.500" stroke-dasharray="2 1.500"/>',
  textSnap: '<text x="14" y="20" text-anchor="middle" font-family="Liberation Sans, sans-serif" font-weight="700" font-size="24" fill="#111">A</text><path d="M3 21h18" stroke="#4a9a5a" stroke-width="1.500"/><circle cx="4" cy="21" r="2.200" fill="#7ab0a0" stroke="#357"/>',
  page: '<defs><linearGradient id="gp" x1="0" y1="0" x2="1" y2="1"><stop offset="0" stop-color="#fff"/><stop offset="1" stop-color="#aaa"/></linearGradient></defs><rect x="4.500" y="2" width="15" height="20" fill="url(#gp)" stroke="#333" stroke-width="1.500"/>',
  grid: '<path d="M5 1v22M10 1v22M15 1v22M20 1v22M1 5h22M1 10h22M1 15h22M1 20h22" stroke="#2222ee" stroke-width="1.400"/>',
  guide: '<path d="M3 1v22M21 1v22" stroke="#2a55dd" stroke-width="1.800"/><path d="M8 23L16 1" stroke="#2a55dd" stroke-width="1.800"/>',
}
</script>

<style>
html,
body {
  margin: 0;
  background: #f0f0f0;
}
</style>

<style scoped>
.app {
  width: 1920px;
  height: 1080px;
  display: flex;
  flex-direction: column;
  overflow: hidden;
  background: #f0f0f0;
  font-family: "Open Sans", "Noto Sans", sans-serif;
  font-size: 13px;
  color: #222;
}

svg {
  display: block;
  flex: none;
}

i {
  display: block;
}

/* title */
.titlebar {
  height: 29px;
  flex: none;
  box-sizing: border-box;
  display: flex;
  align-items: center;
  background: #fff;
  border-bottom: 1px solid #e4e4e4;
  padding-left: 2px;
}

.title-logo {
  width: 22px;
  height: 24px;
}

.title-text {
  margin-left: 3px;
  font-size: 14px;
}

.win-btns {
  margin-left: auto;
  display: flex;
  margin-right: 8px;
  gap: 11px;
}

.win-btns svg {
  width: 46px;
  height: 29px;
}

/* menu */
.menubar {
  height: 25px;
  flex: none;
  box-sizing: border-box;
  display: flex;
  align-items: center;
  gap: 17.500px;
  padding-left: 10px;
  background: #fff;
  border-bottom: 1px solid #e4e4e4;
  font-size: 14px;
}

/* toolbar */
.toolbar {
  height: 41px;
  flex: none;
  box-sizing: border-box;
  display: flex;
  align-items: center;
  padding: 2px 0 0 3px;
  background: #fff;
  border-bottom: 2px solid #e6e6e6;
}

.tb-icon {
  width: 22px;
  height: 22px;
  padding: 0 5.250px;
}

.tb-sep {
  width: 1px;
  height: 26px;
  background: #bbb;
  margin: 0 7px 0 7px;
}

.dim-label {
  color: #888;
  font-size: 14px;
}

.dim-box {
  width: 55px;
  height: 26px;
  box-sizing: border-box;
  border: 1px solid #b4b4b4;
  background: #f0f0f0;
  color: #888;
  line-height: 24px;
  padding-left: 3px;
  font-size: 13.500px;
  overflow: hidden;
  white-space: nowrap;
  letter-spacing: -0.200px;
}

.spin {
  width: 12px;
  height: 26px;
  margin-left: 1px;
  background: #f0f0f0;
  display: flex;
  flex-direction: column;
  align-items: center;
  justify-content: space-around;
  padding: 2px 0;
  box-sizing: border-box;
}

.spin i {
  width: 0;
  height: 0;
  border-left: 4px solid transparent;
  border-right: 4px solid transparent;
}

.spin .up {
  border-bottom: 4px solid #8a8a8a;
}

.spin .down {
  border-top: 4px solid #8a8a8a;
}

.spin .down.dark {
  border-top-color: #222;
}

.dim-lock {
  width: 15px;
  height: 18px;
  margin-left: 12px;
}

.unit-combo {
  width: 53px;
  height: 26px;
  margin-left: 2px;
  box-sizing: border-box;
  border: 1px solid #aaa;
  display: flex;
  align-items: center;
  padding-left: 3px;
  background: #fff;
  color: #111;
  font-size: 14px;
  justify-content: space-between;
}

.unit-combo b,
.layer-combo b,
.blend-combo b {
  height: 100%;
  width: 20px;
  background: #ccc;
  display: flex;
  align-items: center;
  justify-content: center;
}

.unit-combo b svg,
.layer-combo b svg,
.blend-combo b svg {
  width: 12px;
  height: 8px;
}

.sep-units {
  margin: 0 7px;
}

.toggle-group {
  display: flex;
}

.toggle {
  width: 32.500px;
  height: 33px;
  box-sizing: border-box;
  background: #cce8ff;
  border: 1px solid #99d1ff;
}

/* main */
.main {
  height: 860px;
  flex: none;
  display: flex;
  align-items: stretch;
}

.left-tools {
  width: 44px;
  flex: none;
  box-sizing: border-box;
  padding: 2px 0 0 1px;
  background: #fff;
  border-right: 4px solid #f0f0f0;
  border-left: 1px solid #f0f0f0;
  display: flex;
  flex-direction: column;
}

.tool {
  height: 37.600px;
  flex: none;
  box-sizing: border-box;
  display: flex;
  align-items: center;
  justify-content: center;
}

.tool svg {
  width: 30px;
  height: 30px;
  overflow: visible;
}

.tool.selected {
  background: #cce8ff;
  border: 1px solid #99d1ff;
}

.tool.selected svg {
  width: 26px;
  height: 26px;
}

.center {
  width: 1431px;
  flex: none;
  display: flex;
  flex-direction: column;
}

.canvas-row {
  height: 839px;
  flex: none;
  margin-top: 1px;
  display: flex;
}

.canvas {
  width: 1403px;
  height: 839px;
  flex: none;
  background: #fff;
}

.drawing {
  width: 1403px;
  height: 839px;
}

.vscroll {
  width: 20px;
  display: flex;
  flex-direction: column;
  align-items: center;
}

.corner-zoom {
  width: 15px;
  height: 15px;
}

.arrow-v {
  width: 11px;
  height: 8px;
  margin: 8px 0;
}

.vtrack {
  flex: 1;
  width: 20px;
  padding-top: 282px;
  box-sizing: border-box;
}

.vthumb {
  height: 159px;
  background: #cdcdcd;
}

.hscroll {
  height: 20px;
  flex: none;
  display: flex;
  align-items: center;
  padding-left: 6px;
}

.arrow-h {
  width: 8px;
  height: 11px;
}

.htrack {
  width: 1372px;
  height: 19px;
  padding-left: 304px;
  box-sizing: border-box;
}

.hthumb {
  width: 652px;
  height: 19px;
  background: #cdcdcd;
}

.cms {
  width: 12px;
  height: 14px;
  margin-left: 10px;
}

/* dock */
.dock {
  width: 367px;
  flex: none;
  box-sizing: border-box;
  border-left: 2px solid #333;
  border-top: 2px solid #555;
  height: 859px;
  font-size: 14px;
}

.dock-title {
  height: 29px;
  box-sizing: border-box;
  display: flex;
  align-items: center;
  border-bottom: 1px solid #bbb;
  margin-right: 2px;
  font-size: 14.500px;
}

.dock-icon {
  width: 17px;
  height: 18px;
}

.dock-btns {
  margin-left: auto;
  display: flex;
  gap: 13px;
  margin-right: 6px;
}

.dock-btns svg {
  width: 14px;
  height: 14px;
}

.tabs {
  margin: 6px 6px 0;
  height: 31px;
  display: flex;
  align-items: flex-end;
}

.tab {
  height: 28px;
  box-sizing: border-box;
  display: flex;
  align-items: center;
  background: #f0f0f0;
  border: 1px solid #dedede;
  border-bottom: none;
  padding-left: 2px;
  white-space: nowrap;
}

.tab.active {
  width: 51px;
  height: 31px;
  background: #fff;
  padding-left: 5px;
  gap: 7px;
}

.tab.paint {
  width: 105px;
  gap: 4px;
}

.tab.style {
  width: 104px;
  padding-left: 4px;
  gap: 6px;
}

.tab.style svg {
  width: 12px;
  height: 10px;
}

.tab-swatch {
  width: 11px;
  height: 11px;
  background: linear-gradient(135deg, #8fb2da, #dbe7f2);
}

.tab-empty {
  width: 11px;
  height: 11px;
  border: 1px solid #999;
  background: #fff;
}

.notebook {
  margin: 0 6px;
  height: 245px;
  box-sizing: border-box;
  background: #fff;
  border: 1px solid #dedede;
  border-top: none;
  padding: 15px 0 0 9px;
}

.paint-row {
  display: flex;
  align-items: center;
  height: 25px;
  gap: 12.500px;
}

.paint-x {
  width: 14px;
  height: 14px;
  margin: 0 6px 0 10px;
}

/* dithered look of the disabled paint buttons */
.paint-sq {
  width: 25px;
  height: 25px;
  box-sizing: border-box;
  border: 2px dotted #444;
  background: repeating-conic-gradient(#0000002a 0 25%, transparent 0 50%) 0 0 / 2px 2px, #a9aeb4;
}

.paint-sq.linear {
  background: repeating-conic-gradient(#0000002a 0 25%, transparent 0 50%) 0 0 / 2px 2px, linear-gradient(90deg, #b5b8bc, #d4d6d8);
}

.paint-sq.radial {
  background: repeating-conic-gradient(#0000002a 0 25%, transparent 0 50%) 0 0 / 2px 2px, radial-gradient(circle, #e2e4e6, #9ca1a8);
}

.paint-sq.mesh {
  background: repeating-conic-gradient(#00000024 0 25%, transparent 0 50%) 0 0 / 2px 2px, radial-gradient(circle, #eeeeef 30%, #a4a9ae 62%) 0 0 / 10px 10px;
}

.paint-sq.pattern {
  background: repeating-conic-gradient(#00000020 0 25%, transparent 0 50%) 0 0 / 2px 2px, linear-gradient(135deg, #dcdcdc 62%, #85888c 62%);
}

.paint-q {
  font-family: "Liberation Sans", sans-serif;
  font-weight: 700;
  font-size: 28px;
  color: #333;
  width: 22px;
  text-align: center;
  line-height: 25px;
}

.shield {
  width: 14px;
  height: 14px;
  margin-left: -2px;
}

.shield.first {
  margin-left: 24px;
}

.no-objects {
  margin-top: 18px;
  font-weight: 700;
  font-size: 14px;
  color: #111;
}

.slider-row {
  margin: 5px 6px 0;
  height: 30px;
  display: flex;
  align-items: center;
}

.slider-row.blur {
  margin-top: 6px;
}

.slider {
  width: 337px;
  height: 29px;
  box-sizing: border-box;
  border: 1px solid #ccc;
  border-bottom: 2px solid #bbb;
  display: flex;
  justify-content: space-between;
  align-items: center;
  padding: 0 4px;
}

.blur .slider {
  color: #888;
}

.slider.on {
  padding: 3px 3px 2px;
  background: #fff;
  align-items: stretch;
}

.fill {
  flex: 1;
  display: flex;
  justify-content: space-between;
  align-items: center;
  padding: 0 1px 0 4px;
  background: #b4c1ca;
  border-right: 2px solid #333;
  border-bottom: 2px solid #444;
  color: #222;
}

.spin.tall {
  width: 14px;
  height: 29px;
  margin-left: 0;
}

.layers-title {
  margin-top: 9px;
  height: 34px;
  padding-top: 4px;
}

.layer-list {
  margin: 6px 6px 0;
  height: 80px;
  box-sizing: border-box;
  background: #fff;
  border: 1px solid #b5b5b5;
  padding-top: 2px;
}

.layer-row {
  height: 29px;
  background: #f0f0f0;
  display: flex;
  align-items: center;
  padding-left: 6px;
}

.layer-eye {
  width: 14px;
  height: 14px;
}

.layer-lock {
  width: 14px;
  height: 14px;
  margin-left: 8px;
}

.layer-row span {
  margin-left: 27px;
}

.layer-btns {
  margin: 7px 6px 0;
  height: 20px;
  display: flex;
  align-items: center;
  padding-left: 7px;
}

.layer-btns svg {
  width: 19px;
  height: 19px;
}

.layer-btns .minus {
  margin-left: 13px;
}

.layer-btns .mv {
  margin-left: 13.500px;
}

.layer-btns .mv.first {
  margin-left: 170px;
}

.blend-row {
  margin: 8px 6px 0;
  height: 26px;
  display: flex;
  align-items: center;
}

.blend-label {
  width: 99px;
}

.blend-combo {
  flex: 1;
  height: 26px;
  box-sizing: border-box;
  border: 1px solid #bbb;
  background: #fff;
  display: flex;
  align-items: center;
  justify-content: space-between;
  padding-left: 4px;
}

.dock-end {
  margin-top: 8px;
  height: 1px;
  background: #f8f8f8;
}

/* right bars */
.right-tools {
  width: 75px;
  flex: none;
  height: 858px;
  margin-left: 3px;
  background: #fff;
  display: flex;
  padding-top: 2px;
  box-sizing: border-box;
}

.cmd-col {
  width: 37px;
  display: flex;
  flex-direction: column;
  align-items: center;
  padding-top: 1px;
}

.cmd {
  height: 32.600px;
  width: 32px;
  flex: none;
  box-sizing: border-box;
  display: flex;
  align-items: center;
  justify-content: center;
}

.cmd svg {
  width: 23px;
  height: 23px;
  overflow: visible;
}

.cmd.on {
  background: #cce8ff;
  border: 1px solid #99d1ff;
}

.col-sep {
  width: 20px;
  height: 1px;
  margin: 7px 0 6.700px;
  background: #bbb;
  flex: none;
}

.more {
  width: 12px;
  height: 9px;
  margin-top: 16px;
}

/* palette */
.palette {
  height: 24px;
  flex: none;
  box-sizing: border-box;
  display: flex;
  background: #fff;
  border-top: 2px solid #333;
  padding-bottom: 4px;
}

.none-swatch {
  width: 18px;
  height: 18px;
  margin-left: 1px;
}

.swatches {
  width: 1887px;
  display: flex;
  overflow: hidden;
}

.swatches i {
  width: 17.500px;
  flex: none;
  height: 18px;
}

.palette-menu {
  width: 0;
  height: 0;
  margin: 3px 0 0 6px;
  border-top: 5px solid transparent;
  border-bottom: 5px solid transparent;
  border-right: 6px solid #111;
}

.palette-scroll {
  height: 18px;
  flex: none;
  display: flex;
  align-items: center;
}

.palette-scroll .light {
  margin-left: 6px;
}

.pal-thumb {
  width: 469px;
  height: 18px;
  margin-left: 7px;
  background: #cdcdcd;
}

.palette-scroll .end {
  margin-left: auto;
  margin-right: 18px;
}

/* status */
.statusbar {
  height: 33px;
  flex: none;
  display: flex;
  align-items: center;
  font-size: 13px;
  overflow: hidden;
}

.fs-info {
  display: grid;
  grid-template-columns: 87px 67px;
  line-height: 16px;
  padding-left: 4px;
  margin-top: 1px;
}

.o-label {
  width: 17px;
}

.o-box {
  width: 45px;
  height: 25px;
  box-sizing: border-box;
  border: 1px solid #bbb;
  line-height: 23px;
  padding-left: 4px;
  color: #888;
}

.spin.small {
  width: 12px;
  height: 25px;
  margin-left: 2px;
}

.spin.small.active .up {
  border-bottom-color: #222;
}

.spin.small.active .down {
  border-top-color: #222;
}

.st-sep {
  width: 1px;
  height: 33px;
  background: #ccc;
  margin-left: 5px;
}

.st-eye {
  width: 14px;
  height: 14px;
  margin-left: 4px;
}

.st-lock {
  width: 14px;
  height: 14px;
  margin-left: 5px;
}

.layer-combo {
  width: 87px;
  height: 31px;
  margin-left: 0;
  box-sizing: border-box;
  display: flex;
  align-items: center;
  justify-content: space-between;
  background: #fff;
  padding-left: 4px;
  border: 1px solid #d8d8d8;
  font-weight: 700;
  font-size: 12px;
}

.message {
  margin-left: 7px;
  white-space: nowrap;
  flex: none;
  font-size: 14.250px;
  width: 1350px;
}

.message b {
  font-weight: 700;
}

.coords {
  display: grid;
  grid-template-columns: 22px auto;
  height: 33px;
  box-sizing: border-box;
  border-left: 1px solid #ccc;
  padding-left: 3px;
  line-height: 16px;
  font-size: 13px;
  width: 90px;
  flex: none;
}

.cv {
  letter-spacing: 1px;
}

.z-label {
  width: 14px;
}

.z-box {
  width: 55px;
  height: 25px;
  box-sizing: border-box;
  background: #fff;
  border: 1px solid #bbb;
  text-align: center;
  line-height: 23px;
}

.grip {
  width: 12px;
  height: 12px;
  margin: 16px 0 0 10px;
}

/* taskbar */
.taskbar {
  height: 50px;
  flex: none;
  display: flex;
  background: #000;
  color: #fff;
  font-size: 14px;
}

.start {
  width: 60px;
  display: flex;
  align-items: center;
  justify-content: center;
}

.start svg {
  width: 20px;
  height: 20px;
}

.search {
  width: 430px;
  background: #333;
  color: #a6a6a6;
  font-size: 17px;
  line-height: 50px;
  padding-left: 15px;
  box-sizing: border-box;
}

.task-view {
  width: 68px;
  display: flex;
  align-items: center;
  padding-left: 19px;
  box-sizing: border-box;
}

.task-view svg {
  width: 24px;
  height: 20px;
}

.task-btn {
  width: 190px;
  margin-right: 11px;
  box-sizing: border-box;
  display: flex;
  align-items: center;
  gap: 6px;
  padding: 2px 0 0 9px;
  border-bottom: 3px solid #aee4f7;
  white-space: nowrap;
}

.task-btn.first {
  padding-left: 8px;
  gap: 8px;
}

.task-btn svg {
  width: 28px;
  height: 28px;
}

.task-btn.current {
  width: 200px;
  margin: 0 0 0 -6px;
  background: #333;
  padding-left: 12px;
}

.tray {
  flex: 1;
  position: relative;
}

.tray svg {
  position: absolute;
}

.t-chev {
  left: 234px;
  top: 20px;
  width: 16px;
  height: 10px;
}

.t-batt {
  left: 271px;
  top: 17px;
  width: 21px;
  height: 14px;
}

.t-wifi {
  left: 314px;
  top: 17px;
  width: 18px;
  height: 18px;
}

.t-vol {
  left: 350px;
  top: 16px;
  width: 20px;
  height: 18px;
}

.t-note {
  left: 392px;
  top: 15px;
  width: 20px;
  height: 22px;
}

.t-kbd {
  left: 432px;
  top: 16px;
  width: 30px;
  height: 20px;
}

.clock {
  position: absolute;
  right: 10px;
  top: 3px;
  display: flex;
  flex-direction: column;
  align-items: center;
  line-height: 21px;
  font-size: 15px;
}
</style>
